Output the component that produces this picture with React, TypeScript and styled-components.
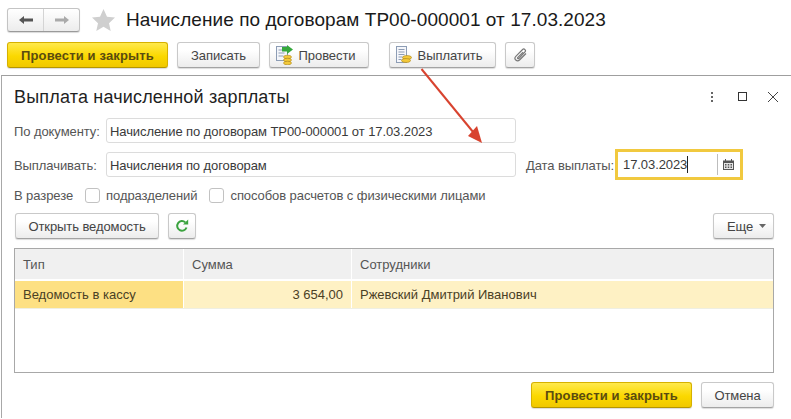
import styled, { createGlobalStyle } from "styled-components";

const GlobalStyle = createGlobalStyle`
  html, body {
    margin: 0;
    background: #fff;
  }
  body {
    font-family: "Liberation Sans", Arial, sans-serif;
  }
`;

const Page = styled.div`
  position: relative;
  width: 791px;
  height: 419px;
  overflow: hidden;
  background: #fff;
  color: #333;
`;

const Header = styled.div`
  display: flex;
  align-items: center;
  height: 24px;
  padding: 8px 0 0 7px;
`;

const NavGroup = styled.div`
  display: flex;
  width: 73px;
  height: 24px;
  box-sizing: border-box;
  border: 1px solid #c4c4c4;
  border-bottom-color: #9a9a9a;
  border-radius: 3px;
  background: linear-gradient(#fff, #ececec);
  box-shadow: 0 1px 1px rgba(0, 0, 0, 0.15);
`;

const NavCell = styled.div<{ $divider?: boolean }>`
  flex: 1;
  display: flex;
  align-items: center;
  justify-content: center;
  border-left: ${({ $divider }) => ($divider ? "1px solid #d4d4d4" : "none")};
`;

const StarBox = styled.div`
  display: flex;
  margin: 0 11px 0 12px;
`;

const Title = styled.h1`
  margin: 0;
  font-size: 19px;
  font-weight: 400;
  line-height: 24px;
  color: #1a1a1a;
  white-space: nowrap;
  letter-spacing: 0.06px;
`;

const Toolbar = styled.div`
  display: flex;
  height: 26px;
  margin-top: 10px;
  padding-left: 7px;
`;

const Button = styled.div<{ $width: number; $gap?: number }>`
  display: flex;
  align-items: center;
  justify-content: center;
  gap: 6px;
  flex: none;
  width: ${({ $width }) => $width}px;
  height: 26px;
  box-sizing: border-box;
  margin-left: ${({ $gap }) => $gap ?? 0}px;
  border: 1px solid #c9c9c9;
  border-bottom-color: #a3a3a3;
  border-radius: 3px;
  background: linear-gradient(#fff 30%, #ececec);
  box-shadow: 0 1px 1px rgba(0, 0, 0, 0.14);
  font-size: 13px;
  letter-spacing: -0.08px;
  color: #444;
  white-space: nowrap;
`;

const PrimaryButton = styled(Button)`
  border-color: #d6b100;
  border-bottom-color: #b59600;
  background: linear-gradient(#ffe94d, #fbd800 55%, #f0c800);
  font-weight: 700;
  color: #5a4b10;
  letter-spacing: 0.15px;
`;

const IconButton = styled(Button)`
  padding-right: 7px;
`;

const MoreButton = styled(Button)`
  padding-left: 6px;
`;

const Dialog = styled.section`
  height: 343px;
  margin: 7px 0 0 1px;
  box-sizing: border-box;
  padding: 0 17px 0 13px;
  border-top: 1px solid #9f9f9f;
  border-left: 1px solid #a8a8a8;
`;

const DialogHead = styled.div`
  display: flex;
  align-items: center;
  justify-content: space-between;
  height: 42px;
`;

const DialogTitle = styled.h2`
  margin: 0 0 0 -1px;
  padding-top: 1px;
  font-size: 18px;
  font-weight: 400;
  color: #1f1f1f;
  letter-spacing: 0.18px;
`;

const WindowActions = styled.div`
  display: flex;
  align-items: center;
  gap: 17px;
  margin-right: -5px;

  svg:first-child {
    margin-right: 5px;
  }
`;

const FieldRow = styled.div`
  display: flex;
  align-items: center;
  height: 25px;
  margin-bottom: 9px;
`;

const Label = styled.span`
  flex: none;
  width: 92px;
  margin-left: -1px;
  padding-top: 1px;
  font-size: 13px;
  letter-spacing: -0.08px;
  color: #555;
  white-space: nowrap;
`;

const DateLabel = styled(Label)`
  width: 89px;
  margin-left: 10px;
`;

const Input = styled.div`
  flex: none;
  width: 410px;
  height: 25px;
  box-sizing: border-box;
  padding: 1px 3px 0;
  border: 1px solid #dcdcdc;
  border-radius: 3px;
  font-size: 13px;
  letter-spacing: -0.08px;
  line-height: 23px;
  color: #3a3a3a;
`;

const DateField = styled.div`
  flex: none;
  display: flex;
  align-items: center;
  width: 128px;
  height: 31px;
  box-sizing: border-box;
  padding-left: 5px;
  border: 3px solid #f1c93f;
  font-size: 13px;
  letter-spacing: -0.08px;
  color: #3a3a3a;
`;

const Caret = styled.span`
  width: 1px;
  height: 17px;
  background: #222;
`;

const DateValue = styled.span`
  display: flex;
  align-items: center;
  width: 94px;
`;

const CalendarCell = styled.div`
  display: flex;
  align-items: center;
  justify-content: center;
  flex: 1;
  height: 21px;
  margin-right: 1px;
  border-left: 1px solid #bdbdbd;
`;

const CheckRow = styled.div`
  display: flex;
  align-items: center;
  height: 18px;
  margin: 8px 0 0 -1px;
  font-size: 13px;
  letter-spacing: -0.08px;
  color: #555;
`;

const Check = styled.span<{ $left: number }>`
  flex: none;
  width: 13px;
  height: 13px;
  margin: 0 6px 0 ${({ $left }) => $left}px;
  border: 1px solid #c2c2c2;
  border-radius: 3px;
`;

const TableBar = styled.div`
  display: flex;
  justify-content: space-between;
  margin-top: 9px;
`;

const BarGroup = styled.div`
  display: flex;
`;

const Table = styled.div`
  height: 125px;
  box-sizing: border-box;
  margin: 9px 0 0 -1px;
  border: 1px solid #a8a8a8;
`;

const Row = styled.div<{ $head?: boolean }>`
  display: grid;
  grid-template-columns: 168px 167px 1fr;
  column-gap: 1px;
  height: ${({ $head }) => ($head ? "30px" : "27px")};
  margin-bottom: ${({ $head }) => ($head ? "2px" : "0")};
  border-bottom: ${({ $head }) => ($head ? "none" : "1px solid #efefe2")};
`;

const Cell = styled.div<{ $tone: "head" | "active" | "row"; $right?: boolean }>`
  display: flex;
  align-items: center;
  justify-content: ${({ $right }) => ($right ? "flex-end" : "flex-start")};
  padding: 0 8px;
  font-size: 13px;
  color: ${({ $tone }) => ($tone === "head" ? "#555" : "#4a4025")};
  background: ${({ $tone }) =>
    $tone === "head" ? "#f0f0f0" : $tone === "active" ? "#fde083" : "#fef1c4"};
`;

const Footer = styled.div`
  display: flex;
  justify-content: flex-end;
  margin: 9px 0 0;
`;

const Arrow = styled.svg`
  position: absolute;
  left: 410px;
  top: 60px;
  pointer-events: none;
`;

function BackArrow({ color }: { color: string }) {
  return (
    <svg width="16" height="12" viewBox="0 0 16 12">
      <path d="M1 6 6 2v2.6h9v2.8H6V10z" fill={color} />
    </svg>
  );
}

function ForwardArrow({ color }: { color: string }) {
  return (
    <svg width="16" height="12" viewBox="0 0 16 12">
      <path d="M15 6 10 2v2.6H1v2.8h9V10z" fill={color} />
    </svg>
  );
}

function PostIcon() {
  return (
    <svg width="17" height="20" viewBox="0 0 17 20">
      <rect x="0.5" y="1.5" width="11" height="14" fill="#f4f6fa" stroke="#8d9db5" />
      <path d="M2.5 5h7M2.5 8h6M2.5 11h5" stroke="#8d9db5" />
      <path d="M6 2h5V0l6 4.5-6 4.5V6.500H6z" fill="#35a83c" />
      <ellipse cx="11.500" cy="12" rx="4" ry="1.800" fill="#f3c93a" stroke="#a9831a" strokeWidth="0.6" />
      <ellipse cx="11.500" cy="15" rx="4" ry="1.800" fill="#f3c93a" stroke="#a9831a" strokeWidth="0.6" />
      <ellipse cx="11.500" cy="18" rx="4" ry="1.800" fill="#f3c93a" stroke="#a9831a" strokeWidth="0.6" />
    </svg>
  );
}

function PayIcon() {
  return (
    <svg width="16" height="19" viewBox="0 0 16 19">
      <rect x="0.5" y="0.500" width="10" height="16" fill="#f5f6fa" stroke="#8d9db5" />
      <path d="M2.500 3.500h6M2.500 6h6M2.500 8.500h6M2.500 11h4M2.500 13.500h3" stroke="#8d9db5" />
      <ellipse cx="11" cy="11.500" rx="4.500" ry="2" fill="#f3c93a" stroke="#a9831a" strokeWidth="0.6" />
      <ellipse cx="10" cy="14.500" rx="4.500" ry="2" fill="#f3c93a" stroke="#a9831a" strokeWidth="0.6" />
    </svg>
  );
}

function ClipIcon() {
  return (
    <svg width="15" height="15" viewBox="0 0 15 15" fill="none">
      <path
        d="M13 5.500 6.500 12a2.600 2.600 0 0 1-3.700-3.700l6.800-6.800a1.700 1.700 0 0 1 2.400 2.400L5.800 10.600a.8.8 0 0 1-1.100-1.100l5.400-5.400"
        stroke="#777"
        strokeWidth="1.200"
      />
    </svg>
  );
}

export default function App() {
  return (
    <Page>
      <GlobalStyle />
      <Header>
        <NavGroup>
          <NavCell>
            <BackArrow color="#555" />
          </NavCell>
          <NavCell $divider>
            <ForwardArrow color="#aaa" />
          </NavCell>
        </NavGroup>
        <StarBox>
          <svg width="23" height="22" viewBox="0 0 23 22">
            <path d="M11.500 0 15 7.800l8 .8-6 5.600 1.700 7.800-7.200-4.200-7.200 4.200L6 14.200 0 8.600l8-.8z" fill="#cfcfcf" />
          </svg>
        </StarBox>
        <Title>Начисление по договорам ТР00-000001 от 17.03.2023</Title>
      </Header>

      <Toolbar>
        <PrimaryButton $width={161}>Провести и закрыть</PrimaryButton>
        <Button $width={83} $gap={9}>Записать</Button>
        <IconButton $width={100} $gap={9}>
          <PostIcon />
          Провести
        </IconButton>
        <IconButton $width={107} $gap={20}>
          <PayIcon />
          Выплатить
        </IconButton>
        <Button $width={30} $gap={9}>
          <ClipIcon />
        </Button>
      </Toolbar>

      <Dialog>
        <DialogHead>
          <DialogTitle>Выплата начисленной зарплаты</DialogTitle>
          <WindowActions>
            <svg width="4" height="12" viewBox="0 0 4 12">
              <path d="M1 1h2v2H1zM1 5h2v2H1zM1 9h2v2H1z" fill="#666" />
            </svg>
            <svg width="14" height="14" viewBox="0 0 14 14" fill="none">
              <rect x="2.500" y="2.500" width="8" height="8" stroke="#333" />
            </svg>
            <svg width="12" height="12" viewBox="0 0 12 12" fill="none">
              <path d="M1 1l10 10M11 1 1 11" stroke="#444" />
            </svg>
          </WindowActions>
        </DialogHead>

        <FieldRow>
          <Label>По документу:</Label>
          <Input>Начисление по договорам ТР00-000001 от 17.03.2023</Input>
        </FieldRow>
        <FieldRow>
          <Label>Выплачивать:</Label>
          <Input>Начисления по договорам</Input>
          <DateLabel>Дата выплаты:</DateLabel>
          <DateField>
            <DateValue>
              17.03.2023
              <Caret />
            </DateValue>
            <CalendarCell>
              <svg width="11" height="11" viewBox="0 0 11 11">
                <path d="M0 1.500h2V0h1v1.500h5V0h1v1.500h2V11H0z" fill="#555" />
                <path d="M1 4h9v6H1z" fill="#e6e6e6" />
                <path d="M2 5h1.500v1.500H2zM4.750 5h1.500v1.500h-1.500zM7.500 5H9v1.500H7.500zM2 7.500h1.500V9H2zM4.750 7.500h1.500V9h-1.500zM7.500 7.500H9V9H7.500z" fill="#555" />
              </svg>
            </CalendarCell>
          </DateField>
        </FieldRow>

        <CheckRow>
          В разрезе
          <Check $left={12} />
          подразделений
          <Check $left={12} />
          способов расчетов с физическими лицами
        </CheckRow>

        <TableBar>
          <BarGroup>
            <Button $width={144}>Открыть ведомость</Button>
            <Button $width={28} $gap={9}>
              <svg width="14" height="14" viewBox="0 0 14 14" fill="none">
                <path d="M11.500 8.500A4.800 4.800 0 1 1 10.300 3.400" stroke="#3ba33f" strokeWidth="2" />
                <path d="M8 5.500h5.200V.5z" fill="#3ba33f" />
              </svg>
            </Button>
          </BarGroup>
          <MoreButton $width={61}>
            Еще
            <svg width="7" height="4" viewBox="0 0 7 4">
              <path d="M0 0h7L3.500 4z" fill="#666" />
            </svg>
          </MoreButton>
        </TableBar>

        <Table>
          <Row $head>
            <Cell $tone="head">Тип</Cell>
            <Cell $tone="head">Сумма</Cell>
            <Cell $tone="head">Сотрудники</Cell>
          </Row>
          <Row>
            <Cell $tone="active">Ведомость в кассу</Cell>
            <Cell $tone="row" $right>3 654,00</Cell>
            <Cell $tone="row">Ржевский Дмитрий Иванович</Cell>
          </Row>
        </Table>

        <Footer>
          <PrimaryButton $width={161}>Провести и закрыть</PrimaryButton>
          <Button $width={73} $gap={9}>Отмена</Button>
        </Footer>
      </Dialog>

      <Arrow width="80" height="90" viewBox="0 0 80 90">
        <path d="M11.500 9 68 78" stroke="#d8432f" strokeWidth="2" />
        <path d="M72 83 58 76 67 66z" fill="#d8432f" />
      </Arrow>
    </Page>
  );
}
